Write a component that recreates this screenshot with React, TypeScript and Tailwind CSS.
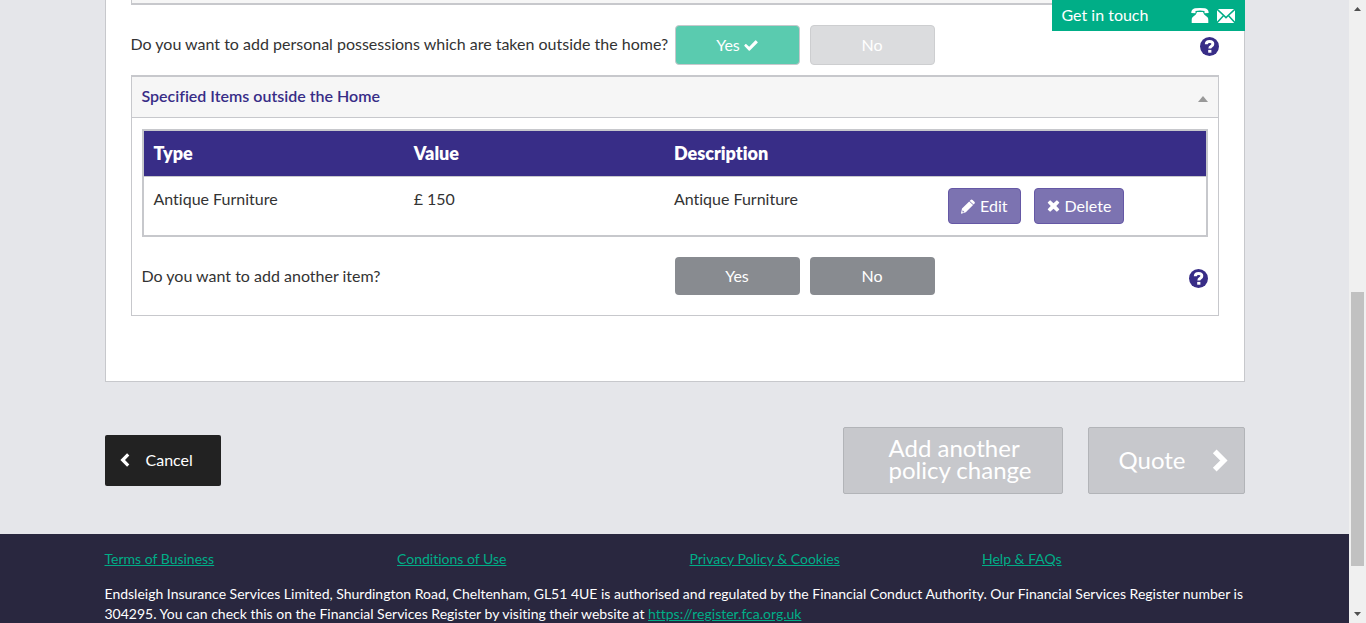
import type { ReactNode } from "react";

type IconProps = { className?: string };

function CheckIcon({ className }: IconProps) {
  return (
    <svg viewBox="0 0 14 11" className={className} fill="currentColor" aria-hidden="true">
      <path d="M2.1 4 5.2 6.7 11.2.5Q11.7.1 12.1.5L13.6 2Q14 2.4 13.6 2.8L5.9 10.5Q5.3 11 4.7 10.5L.4 6.1Q0 5.6.4 5.2L1.5 4.1Q1.8 3.8 2.1 4Z" />
    </svg>
  );
}

function PencilIcon({ className }: IconProps) {
  return (
    <svg viewBox="0 0 14 15" className={className} fill="currentColor" aria-hidden="true">
      <path d="M9.600 1Q10.600 0 11.600 .9L13.400 2.700Q14.300 3.600 13.500 4.500L12.600 5.400 8.700 1.900ZM8.200 2.400 12.100 6.100 4.800 13.300 .4 14.700 0 14.300 1 9.600ZM1.700 11.300 1.400 12.900 2 13.500 3.300 13.100Z" fillRule="evenodd" />
    </svg>
  );
}

function CrossIcon({ className }: IconProps) {
  return (
    <svg viewBox="0 0 12 12" className={className} fill="currentColor" aria-hidden="true">
      <path d="M3 .4 6 3.200 9 .4Q9.400.1 9.700.4L11.600 2.300Q11.900 2.600 11.600 3L8.800 6 11.600 9Q11.900 9.400 11.600 9.700L9.700 11.600Q9.400 11.900 9 11.600L6 8.800 3 11.600Q2.600 11.900 2.300 11.600L.4 9.700Q.1 9.400.4 9L3.200 6 .4 3Q.1 2.600.4 2.300L2.300 .4Q2.600.1 3 .4Z" />
    </svg>
  );
}

function PhoneIcon({ className }: IconProps) {
  return (
    <svg viewBox="0 0 18 15" className={className} fill="currentColor" aria-hidden="true">
      <path d="M4 .3Q9-.3 14 .3Q17 .8 17.600 4V5L13.500 5.200V3Q9 2 4.500 3V5.200L.3 5V4Q1 .8 4 .3ZM6 4H12L13.200 6.500 16.500 9.200Q17.300 10 17.300 12V15H.7V12Q.7 10 1.500 9.200L4.800 6.500Z" />
    </svg>
  );
}

function MailIcon({ className }: IconProps) {
  return (
    <svg viewBox="0 0 18 14" className={className} fill="currentColor" aria-hidden="true">
      <path d="M1 0H17L9 7.600ZM0 1.200 5.700 6.600 0 12.500ZM18 1.200V12.500L12.300 6.600ZM6.700 7.600 9 9.700 11.300 7.600 17.200 14H.8Z" />
    </svg>
  );
}

function ChevronIcon({ className }: IconProps) {
  return (
    <svg viewBox="0 0 16 24" className={className} fill="none" stroke="currentColor" strokeWidth="5.500" aria-hidden="true">
      <path d="M2.500 2.500 12 12 2.500 21.500" />
    </svg>
  );
}

function HelpButton() {
  return (
    <button type="button" aria-label="Help" className="block size-[19px] text-[#382d87]">
      <svg viewBox="0 0 19 19" className="size-full" aria-hidden="true">
        <circle cx="9.500" cy="9.500" r="9.500" fill="currentColor" />
        <path d="M6.300 7.300Q6.300 4.400 9.600 4.400T12.800 7Q12.800 8.300 11.300 9.200T9.800 11.500" fill="none" stroke="#fff" strokeWidth="3" />
        <rect x="8.200" y="12.900" width="3.200" height="2.800" fill="#fff" />
      </svg>
    </button>
  );
}

function ActionButton({ children }: { children: ReactNode }) {
  return (
    <button type="button" className="flex h-9 items-center gap-[5px] rounded border border-[#6558a5] bg-[#7c73b1] px-3 text-white">
      {children}
    </button>
  );
}

const choice = "flex w-[125px] items-center justify-center gap-1 rounded text-white";
const link = "text-[#00ae87] underline";
const heading = "px-[10px] pb-0.5 font-extrabold";
const cell = "border-t border-[#c7c8cc] px-[10px] pt-[10px]";

export default function App() {
  return (
    <div className="flex h-screen overflow-hidden bg-[#e5e6ea] font-['Lato',sans-serif] text-base leading-6 text-[#333] [font-variant-ligatures:none]">
      <div className="min-w-0 flex-1">
        <main className="relative mx-auto max-w-[1140px]">
          <div className="absolute top-0 right-0 flex h-[31px] w-[193px] items-center bg-[#00ae87] px-[10px] text-white">
            <span className="flex-1 pb-px">Get in touch</span>
            <a href="#phone" aria-label="Call us"><PhoneIcon className="h-[15px] w-[18px]" /></a>
            <a href="#email" aria-label="Email us" className="ml-2"><MailIcon className="h-[14px] w-[18px]" /></a>
          </div>

          <section className="border-x border-b border-[#c7c8cc] bg-white px-[25px] pb-[65px]">
            <div className="h-[5px] border-x border-b-2 border-[#c7c8cc] bg-[#f6f6f6]" />

            <div className="grid grid-cols-2 pt-5 pb-[10px]">
              <p className="pt-[7px]">Do you want to add personal possessions which are taken outside the home?</p>
              <div className="flex gap-[10px]">
                <button type="button" className={`${choice} h-10 border border-[#c7c8cc] bg-[#5acbaf]`}>
                  Yes <CheckIcon className="h-[11px] w-[14px]" />
                </button>
                <button type="button" className={`${choice} h-10 border border-[#cdced0] bg-[#dbdcde]`}>No</button>
                <div className="mt-3 ml-auto"><HelpButton /></div>
              </div>
            </div>

            <section className="border border-t-2 border-[#c7c8cc]">
              <h2 className="border-b border-[#c7c8cc] bg-[#f6f6f6]">
                <button type="button" aria-expanded="true" className="flex h-10 w-full items-center justify-between px-[10px] pb-0.5 font-semibold text-[#382d87]">
                  Specified Items outside the Home
                  <svg viewBox="0 0 10 6" className="mt-1.5 h-[6px] w-[10px]" aria-hidden="true"><path d="M0 6 5 0 10 6Z" fill="#999" /></svg>
                </button>
              </h2>
              <div className="px-[10px] pt-[11px] pb-5">
                <table className="w-full table-fixed border-separate border-spacing-0 border-2 border-[#c7c8cc] text-left">
                  <colgroup>
                    <col className="w-[24.5%]" />
                    <col className="w-[24.5%]" />
                    <col className="w-[24.5%]" />
                    <col />
                  </colgroup>
                  <thead className="bg-[#382d87] text-lg text-white">
                    <tr className="h-[45px]">
                      <th className={heading}>Type</th>
                      <th className={heading}>Value</th>
                      <th className={heading}>Description</th>
                      <th aria-label="Actions" />
                    </tr>
                  </thead>
                  <tbody>
                    <tr className="h-[59px] align-top">
                      <td className={cell}>Antique Furniture</td>
                      <td className={cell}>£ 150</td>
                      <td className={cell}>Antique Furniture</td>
                      <td className="border-t border-[#c7c8cc] pt-[11px] pl-6">
                        <div className="flex gap-[13px]">
                          <ActionButton><PencilIcon className="h-[15px] w-[14px]" /> Edit</ActionButton>
                          <ActionButton><CrossIcon className="h-3 w-[13px]" /> Delete</ActionButton>
                        </div>
                      </td>
                    </tr>
                  </tbody>
                </table>

                <div className="mt-5 grid grid-cols-2">
                  <p className="pt-[7px]">Do you want to add another item?</p>
                  <div className="flex gap-[10px]">
                    <button type="button" className={`${choice} h-[38px] bg-[#888b90]`}>Yes</button>
                    <button type="button" className={`${choice} h-[38px] bg-[#888b90]`}>No</button>
                    <div className="mt-3 ml-auto"><HelpButton /></div>
                  </div>
                </div>
              </div>
            </section>
          </section>

          <div className="flex items-center gap-[25px] pt-[45px] pb-10">
            <button type="button" className="mr-auto flex h-[51px] w-[116px] items-center gap-4 rounded-xs bg-[#222] pb-0.5 pl-[15px] text-white">
              <ChevronIcon className="h-[14px] w-[10px] rotate-180" />
              Cancel
            </button>
            <button type="button" disabled className="h-[67px] w-[220px] rounded-xs border border-[#b2b4b8] bg-[#c7c8cc] pb-1 pl-[45px] text-left text-2xl leading-[22px] text-white">
              Add another<br />policy change
            </button>
            <button type="button" disabled className="flex h-[67px] w-[157px] items-center justify-between rounded-xs border border-[#b2b4b8] bg-[#c7c8cc] pr-4 pl-[30px] text-2xl text-white">
              <span className="pb-0.5">Quote</span>
              <ChevronIcon className="h-[23px] w-4" />
            </button>
          </div>
        </main>

        <footer className="bg-[#29273f] pt-[15px] pb-5 text-sm leading-5 text-white">
          <div className="mx-auto max-w-[1140px]">
            <nav className="-mr-[30px] grid grid-cols-4">
              <div><a href="#terms" className={link}>Terms of Business</a></div>
              <div><a href="#conditions" className={link}>Conditions of Use</a></div>
              <div><a href="#privacy" className={link}>Privacy Policy &amp; Cookies</a></div>
              <div><a href="#help" className={link}>Help &amp; FAQs</a></div>
            </nav>
            <p className="mt-[15px]">
              Endsleigh Insurance Services Limited, Shurdington Road, Cheltenham, GL51 4UE is authorised and regulated by the Financial Conduct Authority. Our Financial Services Register number is 304295. You can check this on the Financial Services Register by visiting their website at <a href="https://register.fca.org.uk" className={link}>https://register.fca.org.uk</a>
            </p>
          </div>
        </footer>
      </div>

      <div className="flex w-[17px] shrink-0 flex-col items-center bg-[#f0f0f0] py-[7px]" aria-hidden="true">
        <svg viewBox="0 0 7 4" className="h-1 w-[7px]"><path d="M0 4 3.500 0 7 4Z" fill="#505050" /></svg>
        <div className="flex-[281]" />
        <div className="w-[13px] flex-[274] bg-[#c1c1c1]" />
        <div className="flex-[46]" />
        <svg viewBox="0 0 7 4" className="h-1 w-[7px]"><path d="M0 0 3.500 4 7 0Z" fill="#505050" /></svg>
      </div>
    </div>
  );
}
